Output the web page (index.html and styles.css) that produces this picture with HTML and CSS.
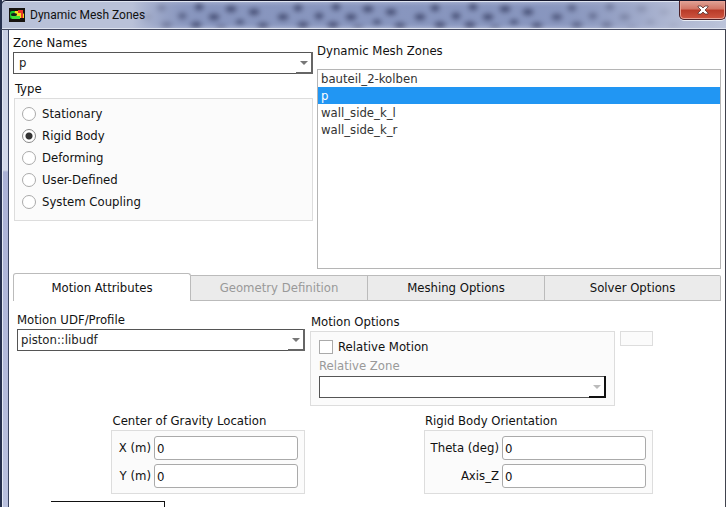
FILE: index.html
```html
<!DOCTYPE html>
<html lang="en">
<head>
<meta charset="utf-8">
<title>Dynamic Mesh Zones</title>
<link rel="stylesheet" href="styles.css">
</head>
<body>
<div class="window">
  <header class="titlebar">
    <svg class="glass" aria-hidden="true" width="100%" height="100%">
      <defs>
        <filter id="soft" x="-5%" y="-20%" width="110%" height="140%"><feGaussianBlur stdDeviation="2.6"/></filter>
        <pattern id="mesh" width="137" height="29" patternUnits="userSpaceOnUse">
          <rect width="137" height="29" fill="#8896bf"/>
          <g fill="#465077">
            <ellipse cx="7" cy="15" rx="6" ry="4"/><ellipse cx="22" cy="6" rx="5" ry="4"/><ellipse cx="27" cy="23" rx="6" ry="4"/>
            <ellipse cx="43" cy="14" rx="5" ry="4"/><ellipse cx="60" cy="5" rx="5" ry="4"/><ellipse cx="57" cy="23" rx="6" ry="4"/>
            <ellipse cx="75" cy="15" rx="6" ry="4"/><ellipse cx="82" cy="26" rx="6" ry="3"/><ellipse cx="92" cy="7" rx="6" ry="4"/>
            <ellipse cx="101" cy="20" rx="5" ry="3"/><ellipse cx="115" cy="10" rx="6" ry="4"/><ellipse cx="124" cy="24" rx="6" ry="4"/>
          </g>
        </pattern>
        <linearGradient id="haze">
          <stop offset="0" stop-color="#b9c1d8"/><stop offset=".18" stop-color="#b9c1d8"/>
          <stop offset=".27" stop-color="#8794bb" stop-opacity=".1"/><stop offset=".74" stop-color="#8794bb" stop-opacity=".1"/>
          <stop offset=".92" stop-color="#b4bcd5" stop-opacity=".85"/><stop offset="1" stop-color="#bcc4da"/>
        </linearGradient>
      </defs>
      <rect width="100%" height="100%" fill="url(#mesh)" filter="url(#soft)"/>
      <rect width="100%" height="100%" fill="url(#haze)"/>
    </svg>
    <svg class="app-icon" viewBox="0 0 16 14" aria-hidden="true">
      <rect width="16" height="14" fill="#17130f"/>
      <rect x="1" y="3" width="9" height="8" rx="2" fill="#19c52c"/>
      <path d="M6 3h6l3 3v4h-5l-2-2H5z" fill="#f5df20"/>
      <path d="M9 2h5v8h-2V5H9z" fill="#e9372a"/>
      <path d="M2 8h9v3H3z" fill="#42df39"/>
      <ellipse cx="5" cy="6.500" rx="3" ry="1.500" fill="#141f18"/>
    </svg>
    <h1>Dynamic Mesh Zones</h1>
    <button class="close" aria-label="Close">
      <svg viewBox="0 0 12 10" aria-hidden="true"><path d="M1 1h3l2 2 2-2h3v1L8 5l3 3v1H8L6 7 4 9H1V8l3-3-3-3z" fill="#fff" stroke="#59312f" stroke-width=".8"/></svg>
    </button>
  </header>

  <main>
    <div class="top">
      <div class="left">
        <label class="caption" for="zone">Zone Names</label>
        <span class="combo indent"><select id="zone"><option>p</option></select></span>
        <fieldset class="type">
          <legend>Type</legend>
          <div class="panel radios">
            <label><input type="radio" name="type">Stationary</label>
            <label><input type="radio" name="type" checked>Rigid Body</label>
            <label><input type="radio" name="type">Deforming</label>
            <label><input type="radio" name="type">User-Defined</label>
            <label><input type="radio" name="type">System Coupling</label>
          </div>
        </fieldset>
      </div>
      <div class="right">
        <label class="caption" for="zones">Dynamic Mesh Zones</label>
        <select id="zones" class="list" size="8">
          <option>bauteil_2-kolben</option>
          <option selected>p</option>
          <option>wall_side_k_l</option>
          <option>wall_side_k_r</option>
        </select>
      </div>
    </div>

    <div class="tabs" role="tablist">
      <button role="tab" aria-selected="true">Motion Attributes</button>
      <button role="tab" disabled>Geometry Definition</button>
      <button role="tab">Meshing Options</button>
      <button role="tab">Solver Options</button>
    </div>

    <div class="attributes">
      <div class="profile">
        <label class="caption" for="udf">Motion UDF/Profile</label>
        <span class="combo"><select id="udf"><option>piston::libudf</option></select></span>
      </div>
      <div class="options">
        <fieldset>
          <legend>Motion Options</legend>
          <div class="panel relative">
            <label class="check"><input type="checkbox">Relative Motion</label>
            <label class="muted" for="relzone">Relative Zone</label>
            <span class="combo off"><select id="relzone" disabled><option></option></select></span>
          </div>
        </fieldset>
        <div class="panel stub"></div>
      </div>
      <fieldset class="gravity">
        <legend>Center of Gravity Location</legend>
        <div class="panel fields">
          <label for="x">X (m)</label><input id="x" type="text" value="0">
          <label for="y">Y (m)</label><input id="y" type="text" value="0">
        </div>
      </fieldset>
      <fieldset class="orientation">
        <legend>Rigid Body Orientation</legend>
        <div class="panel fields">
          <label for="theta">Theta (deg)</label><input id="theta" type="text" value="0">
          <label for="axis">Axis_Z</label><input id="axis" type="text" value="0">
        </div>
      </fieldset>
    </div>
    <div class="next"></div>
  </main>
</div>
</body>
</html>
```
FILE: styles.css
```css
* { box-sizing: border-box; }

body {
  margin: 0;
  color: #111;
  font: 13px/16px "DejaVu Sans Condensed", "DejaVu Sans", sans-serif;
}

button, input, select { font: inherit; color: inherit; margin: 0; }

.window {
  display: flex;
  flex-direction: column;
  height: 100vh;
  overflow: hidden;
  background:
    linear-gradient(90deg, #26304d 2px, #e3e8f4 2px 3px, transparent 3px),
    linear-gradient(#c3cae0, #d3d9ea 170px, #aab1d6 172px, #b9c0de);
}

.titlebar {
  position: relative;
  display: flex;
  align-items: center;
  flex: none;
  height: 30px;
  padding-left: 7px;
  border-top: 1px solid #14172c;
  border-bottom: 1px solid #454b62;
  border-left: 2px solid #26304d;
  border-top-left-radius: 6px;
  box-shadow: inset 0 1px #dfe4f0, inset 0 -1px #dfe4f0;
  overflow: hidden;
}

.glass { position: absolute; inset: 1px 0; z-index: 0; height: 26px; }
.app-icon { position: relative; width: 16px; height: 14px; margin-right: 5px; }

h1 {
  position: relative;
  margin: 0;
  font: 12px/16px Roboto, "Noto Sans", sans-serif;
}

.close {
  position: relative;
  align-self: flex-start;
  display: grid;
  place-items: center;
  width: 47px;
  height: 19px;
  margin-left: auto;
  padding: 0;
  border: 1px solid #4b2027;
  border-top: 0;
  border-radius: 0 0 5px 5px;
  background: linear-gradient(#dfa296, #d27464 45%, #b83a28 50%, #cf5641);
  box-shadow: inset 0 0 0 1px #e7a195, 0 1px #e9edf5;
}
.close svg { width: 12px; height: 10px; }

main {
  display: flex;
  flex-direction: column;
  flex: 1;
  margin: 0 1px 0 8px;
  padding: 0 4px;
  border-left: 1px solid #3b4561;
  background: #fff;
  box-shadow: 1px 0 #41434e;
}

.top { display: grid; grid-template-columns: 300fr 404fr; gap: 4px; }
.left { padding-top: 5px; }
.right { display: flex; flex-direction: column; padding-top: 13px; }
.caption { display: block; }
.left > .caption { margin-bottom: 1px; }
.right .caption { margin-bottom: 10px; }

.combo { position: relative; display: block; height: 22px; }
.combo select {
  appearance: none;
  width: 100%;
  height: 100%;
  padding: 0 20px 0 3px;
  border: 1px solid #555;
  border-radius: 0;
  background: #fff;
  color: #222;
  opacity: 1;
}
.combo.indent select { padding-left: 5px; }
.combo::before {
  content: "";
  position: absolute;
  right: 0;
  bottom: 0;
  width: 15px;
  height: 20px;
  border: solid #666;
  border-width: 0 2px 2px 0;
  pointer-events: none;
}
.combo::after {
  content: "";
  position: absolute;
  right: 5px;
  top: 9px;
  border: 4px solid transparent;
  border-top-color: #777;
  border-bottom: 0;
  pointer-events: none;
}
.combo.off::before { border-color: #111; }
.combo.off::after { border-top-color: #bbb; }

fieldset { min-width: 0; margin: 0; padding: 0; border: 0; }
legend { display: block; padding: 0 1px; }
.panel { border: 1px solid #ddd; background: #fbfbfb; }

.type { margin: 7px 0 0 1px; }
.type .panel { margin-top: 1px; padding: 4px 7px 7px; }
.radios label { display: flex; align-items: center; height: 22px; }

input[type="radio"], input[type="checkbox"] {
  appearance: none;
  flex: none;
  width: 14px;
  height: 14px;
  border: 1px solid #aaa;
  background: #fff;
}
input[type="radio"] { margin-right: 6px; border-radius: 50%; }
input[type="radio"]:checked { border-color: #888; background: radial-gradient(#333 3px, #fff 4px); }
input[type="checkbox"] { margin-right: 5px; }

.list {
  width: 100%;
  height: 200px;
  padding: 0;
  border: 1px solid #b5b5b5;
  border-radius: 0;
  background: #fff;
  color: #333;
  outline: 0;
  overflow: hidden;
}
.list option { min-height: 17px; padding: 1px 3px 0; line-height: 16px; }
.list option:checked { background: #2196f3 linear-gradient(#2196f3, #2196f3); color: #fff; }

.tabs { display: grid; grid-template-columns: 178fr 177fr 177fr 176fr; align-items: end; margin-top: 4px; }
.tabs button {
  height: 26px;
  padding: 0;
  border: 1px solid #bbb;
  border-left-width: 0;
  background: #ebebeb;
  color: #111;
}
.tabs button:last-child { border-top-right-radius: 2px; }
.tabs button:disabled { color: #999; }
.tabs button[aria-selected="true"] {
  height: 28px;
  border-left-width: 1px;
  border-bottom: 0;
  border-radius: 3px 3px 0 0;
  background: #fff;
}

.attributes {
  display: grid;
  grid-template-columns: 288fr 343fr 63fr;
  column-gap: 5px;
  row-gap: 7px;
  padding: 11px 0 0 4px;
}
.profile .caption { margin-bottom: 1px; }
.options { grid-column: 2; display: flex; align-items: flex-start; gap: 5px; padding-top: 2px; }
.options fieldset { flex: 1; }
.options .panel { margin-top: 1px; }
.relative { padding: 7px 8px; }
.check { display: flex; align-items: center; height: 16px; }
.muted { display: block; margin: 3px 0 2px; color: #999; }
.options .stub { width: 33px; height: 15px; margin-top: 17px; }

.gravity { grid-column: 1; justify-self: end; width: 67.2%; }
.orientation { grid-column: 2; justify-self: end; width: 66.8%; }
.fields {
  display: grid;
  grid-template-columns: auto 144px;
  justify-content: end;
  align-items: center;
  gap: 4px 3px;
  margin-top: 1px;
  padding: 5px 6px;
}
.fields label { text-align: right; white-space: nowrap; }
.fields input {
  width: 100%;
  height: 24px;
  padding: 0 2px;
  border: 1px solid #aaa;
  border-radius: 3px;
  background: #fff;
}

.next {
  flex: 1;
  width: 114px;
  margin: 7px 0 0 38px;
  border: solid #111;
  border-width: 1px 1px 0 0;
}
```
